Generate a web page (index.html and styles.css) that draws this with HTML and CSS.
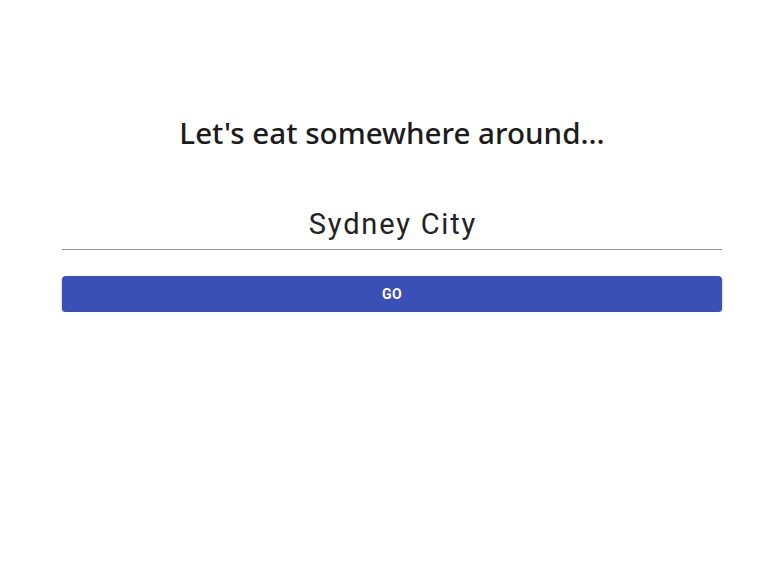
FILE: index.html
```html
<!DOCTYPE html>
<html>
<head>
<meta charset="utf-8">
<link rel="stylesheet" href="styles.css">
</head>
<body>
<div class="page">
  <main class="panel">
    <h1 class="title">Let's eat somewhere around...</h1>
    <div class="field">
      <input class="field-input" type="text" value="Sydney City">
    </div>
    <button class="go-btn" type="button">GO</button>
  </main>
</div>
</body>
</html>
```
FILE: styles.css
```css
html, body {
  margin: 0;
  padding: 0;
  background: #ffffff;
}
.page {
  padding-left: 8px;
}
.panel {
  width: 660px;
  margin: 0 auto;
  padding-top: 113px;
  display: flex;
  flex-direction: column;
}
.title {
  margin: 0;
  text-align: center;
  font-family: "Noto Sans", "Open Sans", sans-serif;
  font-weight: 550;
  font-size: 29.6px;
  line-height: 40px;
  color: #1c1c1c;
}
.field {
  margin-top: 46px;
  border-bottom: 1px solid #949494;
}
.field-input {
  display: block;
  width: 100%;
  box-sizing: border-box;
  border: none;
  outline: none;
  background: transparent;
  padding: 6px 0 5px 1.8px;
  text-align: center;
  font-family: Roboto, sans-serif;
  font-size: 29px;
  letter-spacing: 1.8px;
  line-height: 39px;
  color: #222222;
}
.go-btn {
  margin-top: 26px;
  height: 36px;
  border: none;
  border-radius: 4px;
  background: #3b50b5;
  color: #ffffff;
  font-family: Roboto, sans-serif;
  font-weight: 700;
  font-size: 14px;
  letter-spacing: 0.4px;
  box-shadow: 0 2px 2px rgba(0,0,0,0.2), 0 1px 3px rgba(0,0,0,0.12);
  cursor: pointer;
}
```
